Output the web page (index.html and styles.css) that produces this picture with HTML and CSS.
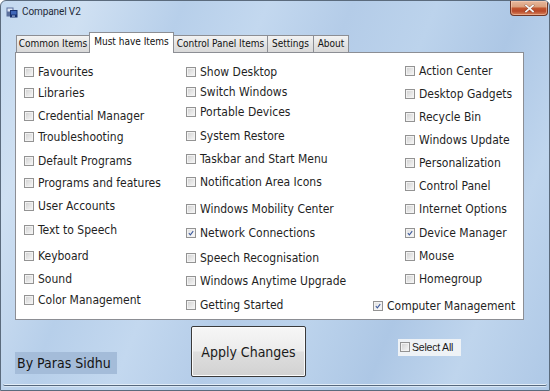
FILE: index.html
```html
<!DOCTYPE html>
<html>
<head>
<meta charset="utf-8">
<title>Companel V2</title>
<link rel="stylesheet" href="styles.css">
</head>
<body>
<div class="window">
  <div class="titlebar">
    <svg class="app-icon" width="12" height="12" viewBox="0 0 12 12">
      <rect x="0.5" y="1.5" width="7" height="9" fill="#5a6f9c"/>
      <rect x="1.5" y="2.5" width="5" height="3" fill="#dfe8f5"/>
      <rect x="4" y="4" width="7.5" height="7.5" fill="#17306e"/>
      <rect x="5" y="5" width="5.5" height="3.5" fill="#3f66b8"/>
      <rect x="6" y="9.5" width="3" height="1.2" fill="#9fb6dd"/>
    </svg>
    <span class="title">Companel V2</span>
    <div class="close-btn">
      <svg width="11" height="9" viewBox="0 0 11 9">
        <path d="M2 1.5 L9 7.5 M9 1.5 L2 7.5" stroke="#5b2a1c" stroke-width="2.6" stroke-linecap="square" opacity="0.5"/>
        <path d="M2 1.5 L9 7.5 M9 1.5 L2 7.5" stroke="#f4f4f4" stroke-width="1.7" stroke-linecap="square"/>
      </svg>
    </div>
  </div>

  <div class="tabs">
    <div class="tab t-common">Common Items</div>
    <div class="tab tab-active t-must">Must have Items</div>
    <div class="tab t-control">Control Panel Items</div>
    <div class="tab t-settings">Settings</div>
    <div class="tab t-about">About</div>
  </div>

  <div class="panel">
    <div class="col col-1">
      <label class="item s21"><span class="cb"></span>Favourites</label>
      <label class="item s23"><span class="cb"></span>Libraries</label>
      <label class="item s21"><span class="cb"></span>Credential Manager</label>
      <label class="item s24"><span class="cb"></span>Troubleshooting</label>
      <label class="item s22"><span class="cb"></span>Default Programs</label>
      <label class="item s23"><span class="cb"></span>Programs and features</label>
      <label class="item s24"><span class="cb"></span>User Accounts</label>
      <label class="item s26"><span class="cb"></span>Text to Speech</label>
      <label class="item s23"><span class="cb"></span>Keyboard</label>
      <label class="item s21"><span class="cb"></span>Sound</label>
      <label class="item"><span class="cb"></span>Color Management</label>
    </div>
    <div class="col col-2">
      <label class="item s20"><span class="cb"></span>Show Desktop</label>
      <label class="item s20"><span class="cb"></span>Switch Windows</label>
      <label class="item s24"><span class="cb"></span>Portable Devices</label>
      <label class="item s23"><span class="cb"></span>System Restore</label>
      <label class="item s23"><span class="cb"></span>Taskbar and Start Menu</label>
      <label class="item s27"><span class="cb"></span>Notification Area Icons</label>
      <label class="item s24"><span class="cb"></span>Windows Mobility Center</label>
      <label class="item s25"><span class="cb cb-checked"><svg viewBox="0 0 10 10"><path d="M2.3 5.2 L4.2 7.3 L7.8 2.6" fill="none" stroke="#3d5a9c" stroke-width="1.3"/></svg></span>Network Connections</label>
      <label class="item s23"><span class="cb"></span>Speech Recognisation</label>
      <label class="item s24"><span class="cb"></span>Windows Anytime Upgrade</label>
      <label class="item"><span class="cb"></span>Getting Started</label>
    </div>
    <div class="col col-3">
      <label class="item s23"><span class="cb"></span>Action Center</label>
      <label class="item s23"><span class="cb"></span>Desktop Gadgets</label>
      <label class="item s23"><span class="cb"></span>Recycle Bin</label>
      <label class="item s23"><span class="cb"></span>Windows Update</label>
      <label class="item s23"><span class="cb"></span>Personalization</label>
      <label class="item s23"><span class="cb"></span>Control Panel</label>
      <label class="item s24"><span class="cb"></span>Internet Options</label>
      <label class="item s23"><span class="cb cb-checked"><svg viewBox="0 0 10 10"><path d="M2.3 5.2 L4.2 7.3 L7.8 2.6" fill="none" stroke="#3d5a9c" stroke-width="1.3"/></svg></span>Device Manager</label>
      <label class="item s23"><span class="cb"></span>Mouse</label>
      <label class="item s27"><span class="cb"></span>Homegroup</label>
      <label class="item item-wide"><span class="cb cb-checked"><svg viewBox="0 0 10 10"><path d="M2.3 5.2 L4.2 7.3 L7.8 2.6" fill="none" stroke="#3d5a9c" stroke-width="1.3"/></svg></span>Computer Management</label>
    </div>
  </div>

  <div class="footer">
    <div class="author">By Paras Sidhu</div>
    <button class="apply">Apply Changes</button>
    <label class="select-all"><span class="cb cb-small"></span>Select All</label>
  </div>
</div>
</body>
</html>
```

FILE: styles.css
```css
html, body {
  margin: 0;
  padding: 0;
}

body {
  width: 550px;
  height: 391px;
  overflow: hidden;
  background: #ffffff;
}

.window {
  box-sizing: border-box;
  width: 550px;
  height: 391px;
  border: 1px solid #5b6b7d;
  border-radius: 6px 6px 0 0;
  background:
    linear-gradient(112deg,
      #c4d9ef 0%,
      #cfe0f2 12%,
      #b7cfea 26%,
      #c3d8ef 38%,
      #b4cce8 50%,
      #bcd3ec 62%,
      #adc7e5 74%,
      #bfd5ed 86%,
      #aec8e6 100%);
  display: flex;
  flex-direction: column;
  overflow: hidden;
  font-family: "DejaVu Sans Condensed", "DejaVu Sans", sans-serif;
  color: #1b1b1b;
}

/* Title bar */
.titlebar {
  display: flex;
  align-items: flex-start;
  height: 31px;
}

.app-icon {
  margin: 5px 0 0 5px;
  flex: none;
}

.title {
  margin: 4px 0 0 4px;
  font-family: Roboto, "Noto Sans", sans-serif;
  font-size: 10px;
  letter-spacing: -0.1px;
  color: #1e2a38;
  line-height: 14px;
}

.close-btn {
  margin-left: auto;
  margin-right: 1px;
  width: 38px;
  height: 15px;
  box-sizing: border-box;
  border: 1px solid #6e3626;
  border-top: none;
  border-radius: 0 0 4px 4px;
  background: linear-gradient(#e8b89c 0%, #dba17f 40%, #c2562f 52%, #b8492a 72%, #d9845c 100%);
  box-shadow: inset 0 0 0 1px rgba(255, 220, 200, 0.45);
  display: flex;
  align-items: center;
  justify-content: center;
}

/* Tabs */
.tabs {
  display: flex;
  align-items: flex-end;
  height: 20px;
  margin-left: 15px;
  position: relative;
  z-index: 1;
}

.tab {
  box-sizing: border-box;
  height: 17px;
  border: 1px solid #8c8e94;
  border-bottom: none;
  border-left: none;
  background: linear-gradient(#f3f3f3, #e3e3e3 55%, #d9d9d9);
  font-size: 10px;
  line-height: 16px;
  text-align: center;
  white-space: nowrap;
  color: #111111;
}

.t-common { width: 74px; border-left: 1px solid #8c8e94; }
.t-must { width: 85px; }
.t-control { width: 94px; }
.t-settings { width: 46px; }
.t-about { width: 35px; }

.tab-active {
  height: 21px;
  margin-bottom: -1px;
  background: #ffffff;
  border-left: 1px solid #8c8e94;
  line-height: 17px;
  margin-left: -1px;
}

.tab-active + .tab {
  border-left: none;
}

/* Panel */
.panel {
  box-sizing: border-box;
  width: 509px;
  height: 268px;
  margin-left: 14px;
  border: 1px solid #8c8e94;
  background: #ffffff;
  display: flex;
  padding-left: 8px;
}

.col {
  display: flex;
  flex-direction: column;
  padding-top: 11px;
}

.col-1 { width: 162px; }
.col-2 { width: 219px; }
.col-3 { padding-top: 10px; }

.item {
  display: flex;
  align-items: flex-start;
  font-size: 12px;
  line-height: 16px;
  white-space: nowrap;
  color: #1f1f1f;
}

.s20 { height: 20px; }
.s21 { height: 21px; }
.s22 { height: 22px; }
.s23 { height: 23px; }
.s24 { height: 24px; }
.s25 { height: 25px; }
.s26 { height: 26px; }
.s27 { height: 27px; }

.item-wide {
  margin-left: -32px;
}

.cb {
  flex: none;
  box-sizing: border-box;
  width: 10px;
  height: 10px;
  margin: 3px 4px 0 0;
  border: 1px solid #939393;
  background: linear-gradient(135deg, #cfcfcf 0%, #e4e4e4 50%, #f7f7f7 100%);
  box-shadow: inset 0 0 0 1px #f2f2f2;
  display: flex;
}

.cb svg {
  width: 8px;
  height: 8px;
}

.cb-checked {
  background: linear-gradient(135deg, #dcdcdc 0%, #efefef 50%, #fbfbfb 100%);
}

/* Footer */
.footer {
  flex: 1;
  display: flex;
  align-items: flex-start;
  margin: 0 2px 4px;
  padding-left: 12px;
  border-bottom: 1px solid #56687d;
  box-shadow: 0 1px 0 #d8e6f4, inset 0 -1px 0 #e2edf8;
  border-radius: 0 0 2px 2px;
}

.author {
  margin-top: 32px;
  width: 102px;
  height: 22px;
  box-sizing: border-box;
  padding-left: 2px;
  background: #a4bcd9;
  font-size: 14px;
  line-height: 22px;
  color: #141414;
  white-space: nowrap;
}

.apply {
  margin: 6px 0 0 74px;
  width: 115px;
  height: 51px;
  box-sizing: border-box;
  border: 1px solid #3a3a3a;
  border-radius: 2px;
  background: linear-gradient(#f6f6f6 0%, #ececec 48%, #dedede 52%, #d2d2d2 100%);
  box-shadow: inset 0 0 0 1px #fbfbfb;
  font-family: "DejaVu Sans Condensed", "DejaVu Sans", sans-serif;
  font-size: 14px;
  color: #1a1a1a;
  padding: 0;
}

.select-all {
  margin: 19px 0 0 92px;
  width: 63px;
  height: 17px;
  box-sizing: border-box;
  padding-left: 2px;
  background: #eef2f6;
  display: flex;
  align-items: flex-start;
  font-family: "Liberation Sans", Arial, sans-serif;
  font-size: 10.5px;
  line-height: 16px;
  color: #1a1a1a;
  letter-spacing: -0.2px;
  white-space: nowrap;
}

.cb-small {
  margin: 3px 2px 0 0;
}
```
